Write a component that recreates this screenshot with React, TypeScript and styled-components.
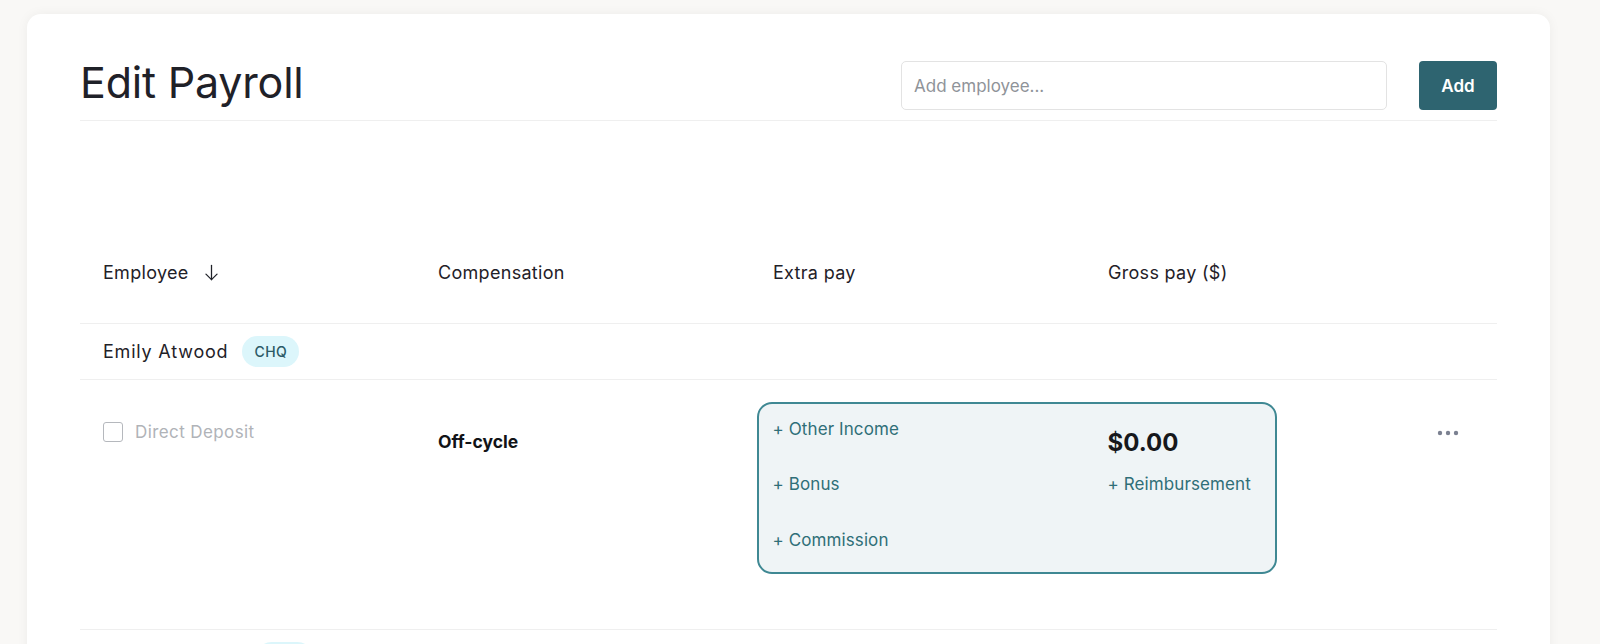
import styled, { createGlobalStyle } from "styled-components";

const GlobalStyle = createGlobalStyle`
  html, body {
    margin: 0;
    padding: 0;
    height: 100%;
    overflow: hidden;
    background: #f9f8f6;
    font-family: Inter, "Noto Sans", sans-serif;
    color: #1f2128;
  }
`;

const Page = styled.div`
  height: 644px;
  overflow: hidden;
  padding: 14px 50px 0 27px;
`;

const Card = styled.div`
  background: #ffffff;
  border-radius: 14px;
  box-shadow: 0 0 12px rgba(0, 0, 0, 0.05);
  padding: 0 53px 40px 53px;
  min-height: 700px;
`;

const Header = styled.div`
  display: flex;
  align-items: flex-start;
  justify-content: space-between;
  border-bottom: 1px solid #efefef;
  padding-top: 47px;
  height: 59px;
`;

const Title = styled.h1`
  margin: 0;
  font-size: 43px;
  font-weight: 400;
  line-height: 1;
  letter-spacing: -0.2px;
  color: #1f2128;
`;

const Controls = styled.div`
  display: flex;
  align-items: center;
  gap: 32px;
`;

const SearchInput = styled.input`
  width: 486px;
  height: 49px;
  box-sizing: border-box;
  border: 1.5px solid #e3e3e3;
  border-radius: 5px;
  padding: 0 12px;
  font-family: inherit;
  font-size: 17px;
  color: #1f2128;
  outline: none;
  &::placeholder {
    color: #8f9399;
  }
`;

const AddButton = styled.button`
  width: 78px;
  height: 49px;
  border: none;
  border-radius: 4px;
  background: #2e6470;
  color: #ffffff;
  font-family: inherit;
  font-size: 17px;
  font-weight: 600;
  cursor: pointer;
`;

const Table = styled.div`
  margin-top: 100px;
`;

const Row = styled.div<{ $height: number; $align?: string }>`
  display: grid;
  grid-template-columns: 335px 335px 335px 335px 1fr;
  align-items: ${(p) => p.$align || "center"};
  height: ${(p) => p.$height}px;
  border-bottom: 1px solid #efefef;
  box-sizing: border-box;
`;

const Cell = styled.div<{ $top?: number }>`
  padding-left: 23px;
  padding-top: ${(p) => p.$top || 0}px;
  display: flex;
  align-items: center;
  gap: 14px;
`;

const HeadText = styled.span`
  font-size: 18px;
  letter-spacing: 0.3px;
  color: #1f2128;
`;

const SortIcon = styled.svg`
  width: 19px;
  height: 19px;
  margin-left: -1px;
`;

const Name = styled.span`
  font-size: 18px;
  letter-spacing: 0.8px;
  color: #1f2128;
`;

const Badge = styled.span`
  background: #dcf6fb;
  color: #2b5a66;
  font-size: 14px;
  font-weight: 500;
  padding: 0 12px;
  height: 31px;
  display: inline-flex;
  align-items: center;
  border-radius: 16px;
  letter-spacing: 0.5px;
`;

const CheckBox = styled.span`
  width: 20px;
  height: 20px;
  border: 1.5px solid #b5b8bd;
  border-radius: 3px;
  box-sizing: border-box;
  margin-right: -2px;
`;

const Muted = styled.span`
  font-size: 17px;
  letter-spacing: 0.4px;
  color: #b0b3b8;
`;

const Bold = styled.span`
  font-size: 17.5px;
  font-weight: 700;
  color: #111317;
`;

const ExtraBox = styled.div`
  grid-column: 3 / 5;
  margin-left: 7px;
  margin-top: 22px;
  width: 520px;
  height: 172px;
  box-sizing: border-box;
  border: 2.5px solid #3f8893;
  border-radius: 15px;
  background: #eff4f6;
  display: grid;
  grid-template-columns: 335px 1fr;
  grid-template-rows: 55px 56px 1fr;
  padding: 12px 0 0 13.5px;
`;

const PlusLink = styled.a<{ $col: number; $row: number }>`
  grid-column: ${(p) => p.$col};
  grid-row: ${(p) => p.$row};
  font-size: 17px;
  letter-spacing: 0.1px;
  color: #2f6f78;
  text-decoration: none;
  line-height: 26px;
  cursor: pointer;
`;

const Amount = styled.span`
  grid-column: 2;
  grid-row: 1;
  align-self: center;
  margin-top: -2px;
  font-size: 24px;
  font-weight: 700;
  color: #16181c;
`;

const Dots = styled.svg`
  width: 24px;
  height: 6px;
  margin-left: -7px;
`;

const employees = [
  { name: "Emily Atwood", badge: "CHQ" },
  { name: "Olivia Martinez", badge: "CHQ" },
];

const SortArrow = () => (
  <SortIcon viewBox="0 0 24 24" fill="none" stroke="#1f2128" strokeWidth="1.6" strokeLinecap="round" strokeLinejoin="round">
    <path d="M12 3v18" />
    <path d="M5 14l7 7 7-7" />
  </SortIcon>
);

const MoreDots = () => (
  <Dots viewBox="0 0 24 6">
    <circle cx="4" cy="3" r="2.2" fill="#7b8191" />
    <circle cx="12" cy="3" r="2.2" fill="#7b8191" />
    <circle cx="20" cy="3" r="2.2" fill="#7b8191" />
  </Dots>
);

const EmployeeBlock = ({ name, badge }: { name: string; badge: string }) => (
  <>
    <Row $height={56}>
      <Cell>
        <Name>{name}</Name>
        <Badge>{badge}</Badge>
      </Cell>
    </Row>
    <Row $height={250} $align="start">
      <Cell $top={42}>
        <CheckBox />
        <Muted>Direct Deposit</Muted>
      </Cell>
      <Cell $top={51}>
        <Bold>Off-cycle</Bold>
      </Cell>
      <ExtraBox>
        <PlusLink $col={1} $row={1}>+ Other Income</PlusLink>
        <Amount>$0.00</Amount>
        <PlusLink $col={1} $row={2}>+ Bonus</PlusLink>
        <PlusLink $col={2} $row={2}>+ Reimbursement</PlusLink>
        <PlusLink $col={1} $row={3}>+ Commission</PlusLink>
      </ExtraBox>
      <Cell $top={50}>
        <MoreDots />
      </Cell>
    </Row>
  </>
);

export default function App() {
  return (
    <>
      <GlobalStyle />
      <Page>
        <Card>
          <Header>
            <Title>Edit Payroll</Title>
            <Controls>
              <SearchInput placeholder="Add employee..." />
              <AddButton>Add</AddButton>
            </Controls>
          </Header>
          <Table>
            <Row $height={103}>
              <Cell>
                <HeadText>Employee</HeadText>
                <SortArrow />
              </Cell>
              <Cell>
                <HeadText>Compensation</HeadText>
              </Cell>
              <Cell>
                <HeadText>Extra pay</HeadText>
              </Cell>
              <Cell>
                <HeadText>Gross pay ($)</HeadText>
              </Cell>
              <Cell />
            </Row>
            {employees.map((e) => (
              <EmployeeBlock key={e.name} name={e.name} badge={e.badge} />
            ))}
          </Table>
        </Card>
      </Page>
    </>
  );
}
